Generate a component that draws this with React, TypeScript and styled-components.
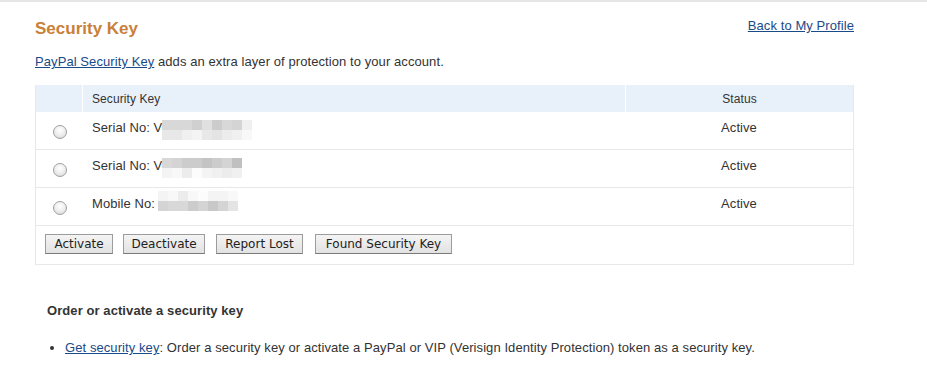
import React from "react";
import styled, { createGlobalStyle } from "styled-components";

const GlobalStyle = createGlobalStyle`
  html, body {
    margin: 0;
    padding: 0;
    background: #fff;
  }
  body {
    font-family: "Liberation Sans", Arial, sans-serif;
    font-size: 13px;
    color: #333;
    letter-spacing: 0.08px;
  }
`;

const Page = styled.div`
  border-top: 2px solid #e6e6e6;
  padding: 0 73px 0 35px;
  width: 819px;
`;

const TitleBar = styled.div`
  display: flex;
  justify-content: space-between;
  align-items: flex-start;
  padding-top: 16px;
  height: 27px;
`;

const Title = styled.h1`
  margin: 1px 0 0;
  font-size: 17px;
  font-weight: bold;
  color: #c98039;
  line-height: 20px;
  letter-spacing: 0;
`;

const Link = styled.a`
  color: #1a4a88;
  text-decoration: underline;
  cursor: pointer;
`;

const BackLink = styled(Link)`
  line-height: 16px;
`;

const Intro = styled.p`
  margin: 9px 0 0;
  line-height: 16px;
`;

const Table = styled.div`
  margin-top: 15px;
  border: 1px solid #e8e8e8;
  border-top: none;
  width: 819px;
  box-sizing: border-box;
`;

const Row = styled.div<{ $head?: boolean }>`
  display: grid;
  grid-template-columns: 46px 543px 1fr;
  height: ${({ $head }) => ($head ? "27px" : "37px")};
  background: ${({ $head }) => ($head ? "#e8f0fa" : "#fff")};
  border-bottom: ${({ $head }) => ($head ? "none" : "1px solid #e8e8e8")};
  font-size: ${({ $head }) => ($head ? "12px" : "13px")};
  color: #333;
`;

const Cell = styled.div<{ $center?: boolean; $sep?: boolean }>`
  display: flex;
  align-items: center;
  justify-content: ${({ $center }) => ($center ? "center" : "flex-start")};
  padding-left: ${({ $center }) => ($center ? "0" : "9px")};
  border-left: ${({ $sep }) => ($sep ? "1px solid #fff" : "none")};
`;

const BodyCell = styled(Cell)`
  align-items: flex-start;
  padding-top: 8px;
  padding-left: ${({ $center }) => ($center ? "0" : "10px")};
  box-sizing: border-box;
`;

const RadioCell = styled.div`
  display: flex;
  justify-content: center;
  padding-top: 13px;
  padding-left: 1px;
`;

const Radio = styled.span`
  width: 14px;
  height: 14px;
  border-radius: 50%;
  border: 1px solid #a0a0a0;
  background: radial-gradient(circle at 50% 35%, #ffffff 0%, #f0f0f0 45%, #d4d4d4 100%);
  box-sizing: border-box;
`;

const Label = styled.span`
  line-height: 15px;
`;

const Mosaic = styled.span<{ $shift: number; $gap: number }>`
  display: inline-grid;
  margin-top: ${({ $shift }) => $shift}px;
  margin-left: ${({ $gap }) => $gap}px;
`;

const MosaicRow = styled.span`
  display: flex;
  height: 10px;
`;

const Pixel = styled.span`
  width: 10px;
  height: 10px;
`;

const ButtonRow = styled.div`
  display: flex;
  padding: 8px 9px 9px;
  height: 38px;
  box-sizing: border-box;
`;

const Button = styled.button<{ $w: number; $gap: number }>`
  font-family: "DejaVu Sans", sans-serif;
  font-size: 12px;
  letter-spacing: 0;
  color: #222;
  width: ${({ $w }) => $w}px;
  margin-right: ${({ $gap }) => $gap}px;
  height: 20px;
  padding: 0;
  border: 1px solid #9c9c9c;
  border-bottom-color: #7a7a7a;
  background: linear-gradient(#f4f4f4, #e2e2e2);
  line-height: 18px;
`;

const SubHeading = styled.h2`
  margin: 38px 0 0 12px;
  font-size: 13px;
  font-weight: bold;
  color: #333;
  line-height: 16px;
`;

const List = styled.ul`
  margin: 21px 0 0;
  padding-left: 30px;
  width: 900px;
  li {
    line-height: 16px;
  }
`;

const Blur: React.FC<{ rows: number[][]; shift: number; gap: number }> = ({ rows, shift, gap }) => (
  <Mosaic $shift={shift} $gap={gap}>
    {rows.map((r, i) => (
      <MosaicRow key={i}>
        {r.map((v, j) => (
          <Pixel key={j} style={{ background: `rgb(${v},${v},${v})` }} />
        ))}
      </MosaicRow>
    ))}
  </Mosaic>
);

const keys = [
  {
    label: "Serial No: V",
    blur: [
      [216, 216, 216, 208, 224, 204, 216, 212, 240],
      [232, 232, 240, 244, 232, 228, 236, 240, 248],
    ],
    shift: 0,
    gap: 0,
  },
  {
    label: "Serial No: V",
    blur: [
      [216, 212, 204, 204, 196, 204, 212, 192],
      [244, 248, 236, 252, 244, 240, 236, 240],
    ],
    shift: 0,
    gap: 0,
  },
  {
    label: "Mobile No:",
    blur: [
      [244, 248, 236, 248, 252, 244, 244, 248],
      [212, 216, 216, 204, 212, 200, 212, 228],
    ],
    shift: -5,
    gap: 3,
  },
];

const buttons = [
  { text: "Activate", w: 68, gap: 10 },
  { text: "Deactivate", w: 82, gap: 11 },
  { text: "Report Lost", w: 87, gap: 12 },
  { text: "Found Security Key", w: 137, gap: 0 },
];

const App: React.FC = () => (
  <>
    <GlobalStyle />
    <Page>
      <TitleBar>
        <Title>Security Key</Title>
        <BackLink>Back to My Profile</BackLink>
      </TitleBar>
      <Intro>
        <Link>PayPal Security Key</Link> adds an extra layer of protection to your account.
      </Intro>
      <Table>
        <Row $head>
          <Cell />
          <Cell $sep>Security Key</Cell>
          <Cell $sep $center>Status</Cell>
        </Row>
        {keys.map((k, i) => (
          <Row key={i}>
            <RadioCell>
              <Radio />
            </RadioCell>
            <BodyCell>
              <Label>{k.label}</Label>
              <Blur rows={k.blur} shift={k.shift} gap={k.gap} />
            </BodyCell>
            <BodyCell $center>
              <Label>Active</Label>
            </BodyCell>
          </Row>
        ))}
        <ButtonRow>
          {buttons.map((b) => (
            <Button key={b.text} $w={b.w} $gap={b.gap}>
              {b.text}
            </Button>
          ))}
        </ButtonRow>
      </Table>
      <SubHeading>Order or activate a security key</SubHeading>
      <List>
        <li>
          <Link>Get security key</Link>: Order a security key or activate a PayPal or VIP
          (Verisign Identity Protection) token as a security key.
        </li>
      </List>
    </Page>
  </>
);

export default App;
